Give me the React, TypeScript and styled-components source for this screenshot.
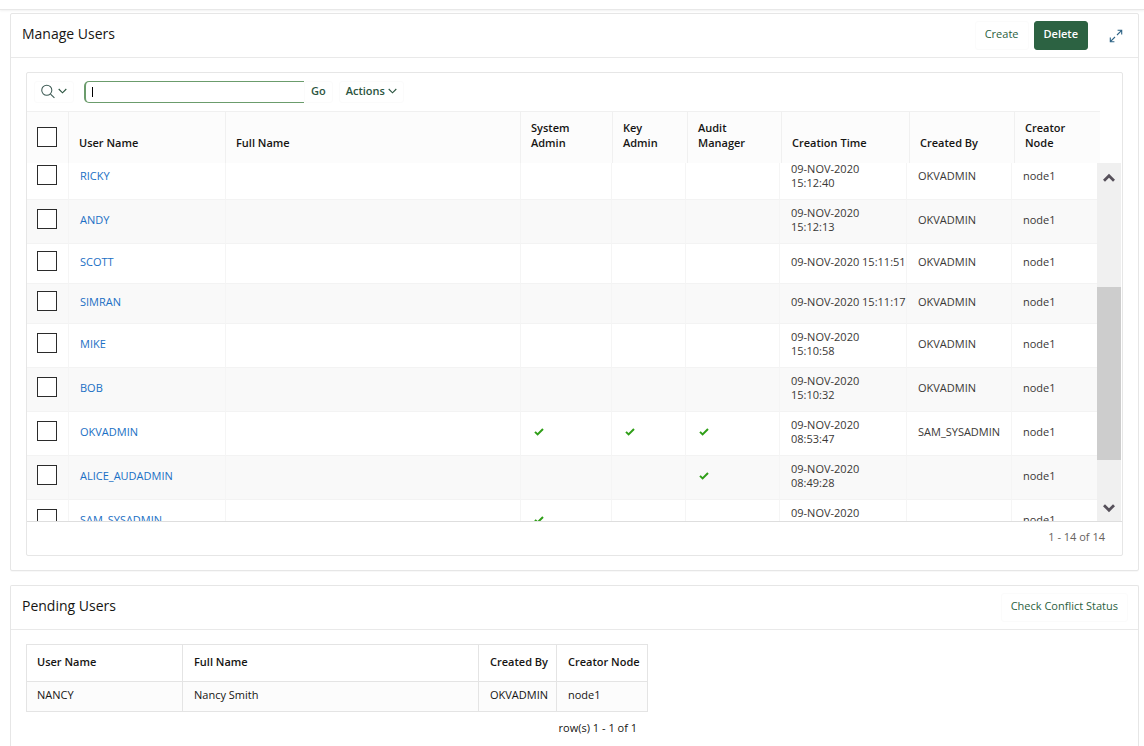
import React, { useLayoutEffect, useRef } from "react";
import styled, { createGlobalStyle } from "styled-components";

const GlobalStyle = createGlobalStyle`
  *, *::before, *::after { box-sizing: border-box; }
  body {
    margin: 0;
    background: #fff;
    color: #161513;
    font-family: "Open Sans", "Noto Sans", sans-serif;
    font-size: 11px;
    line-height: 14px;
  }
  button, input { font: inherit; color: inherit; }
`;

const Page = styled.div`
  display: flex;
  flex-direction: column;
  min-height: 100vh;
`;

const TopBar = styled.header`
  flex: none;
  height: 10px;
  border-bottom: 1px solid #e8e8e8;
  box-shadow: 0 1px 2px rgba(0, 0, 0, 0.06);
`;

const Content = styled.main`
  flex: 1;
  display: flex;
  flex-direction: column;
  gap: 14px;
  padding: 3px 5px 0 10px;
`;

const Panel = styled.section<{ $open?: boolean }>`
  flex: ${(p) => (p.$open ? "1" : "none")};
  border: 1px solid #e6e6e6;
  border-bottom-width: ${(p) => (p.$open ? "0" : "1px")};
  border-radius: ${(p) => (p.$open ? "2px 2px 0 0" : "2px")};
  box-shadow: 0 1px 1px rgba(0, 0, 0, 0.03);
`;

const PanelHeader = styled.div`
  display: flex;
  align-items: flex-start;
  height: 44px;
  padding: 7px 10px 0 11px;
  border-bottom: 1px solid #e9e9e9;
`;

const PanelTitle = styled.h2`
  flex: 1;
  margin: 3px 0 0;
  font-size: 14px;
  line-height: 20px;
  font-weight: 400;
`;

const PanelBody = styled.div`
  padding: 14px 15px;
`;

const Button = styled.button<{ $primary?: boolean }>`
  height: 29px;
  padding: 0 9px 4px;
  border: 1px solid ${(p) => (p.$primary ? "#2c6242" : "#fbfbfb")};
  border-radius: 3px;
  background: ${(p) => (p.$primary ? "#2c6242" : "#fff")};
  color: ${(p) => (p.$primary ? "#fff" : "#2c5f41")};
  font-weight: ${(p) => (p.$primary ? 600 : 400)};
  white-space: nowrap;
`;

const HeaderActions = styled.div`
  display: flex;
  gap: 5px;
`;

const IconButton = styled.button`
  display: grid;
  place-items: center;
  width: 24px;
  height: 29px;
  margin-left: 16px;
  padding: 0;
  border: 0;
  background: none;
`;

const Report = styled.div`
  border: 1px solid #e6e6e6;
  border-radius: 2px;
`;

const Toolbar = styled.form`
  display: flex;
  align-items: center;
  height: 38px;
  padding: 0 7px;
`;

const ToolButton = styled.button<{ $indent?: number }>`
  display: flex;
  align-items: center;
  gap: 3px;
  height: 22px;
  margin-left: ${(p) => p.$indent ?? 0}px;
  padding: 0 6px 2px;
  border: 1px solid #fbfbfb;
  border-radius: 3px;
  background: #fff;
  color: #2c5541;
  font-weight: 600;
`;

const SearchBox = styled.div`
  position: relative;
  margin-left: 10px;
`;

const SearchInput = styled.input`
  display: block;
  width: 220px;
  height: 22px;
  padding: 0 7px;
  border: 1px solid #6b9c6c;
  border-left-width: 2px;
  border-right: 0;
  border-radius: 5px 0 0 5px;
  outline: 0;
  background: #fff;
  caret-color: transparent;
`;

const Caret = styled.span`
  position: absolute;
  left: 8px;
  top: 6px;
  width: 1px;
  height: 10px;
  background: #000;
`;

const HeadWrap = styled.div`
  padding-right: 22px;
`;

const ReportTable = styled.table`
  width: 100%;
  table-layout: fixed;
  border-collapse: separate;
  border-spacing: 0;
`;

const HeadCell = styled.th`
  height: 52px;
  padding: 8px 10px 13px;
  border-top: 1px solid #f0f0f0;
  border-right: 1px solid #f0f0f0;
  background: #fcfcfc;
  line-height: 15px;
  font-weight: 600;
  text-align: left;
  vertical-align: bottom;
  &:first-child { vertical-align: middle; padding-bottom: 10px; }
  &:last-child { border-right: 0; }
`;

const Scroller = styled.div`
  display: flex;
  height: 358px;
`;

const Viewport = styled.div`
  flex: 1;
  overflow: hidden;
`;

const Row = styled.tr`
  &:nth-child(even) { background: #f9f9f9; }
`;

const Cell = styled.td`
  height: 40px;
  padding: 6px 0 9px 11px;
  border-right: 1px solid #f5f5f5;
  border-bottom: 1px solid #f3f3f3;
  color: #3a3836;
  vertical-align: middle;
  white-space: nowrap;
  &:first-child { padding: 6px 10px 11px; }
  &:last-child { border-right: 0; }
`;

const UserLink = styled.a`
  color: #1a6fc4;
  text-decoration: none;
`;

const Checkbox = styled.input.attrs({ type: "checkbox" })`
  appearance: none;
  display: block;
  width: 20px;
  height: 20px;
  margin: 0;
  border: 1px solid #2b2b2b;
  background: #fff;
`;

const CheckIcon = styled.svg`
  display: block;
  margin-left: 2px;
`;

const ScrollBar = styled.div`
  display: flex;
  flex-direction: column;
  width: 24px;
  margin-right: 1px;
  background: #f0f0f0;
`;

const ScrollButton = styled.button`
  display: grid;
  place-items: center;
  height: 28px;
  padding: 2px 0 0;
  border: 0;
  background: none;
`;

const ScrollTrack = styled.div`
  flex: 1;
  padding-top: 96px;
`;

const ScrollThumb = styled.div`
  height: 173px;
  background: #cdcdcd;
`;

const ReportFooter = styled.div`
  height: 34px;
  padding: 8px 17px 0;
  border-top: 1px solid #dedede;
  color: #66625e;
  text-align: right;
`;

const PendingWrap = styled.div`
  width: 622px;
  max-width: 100%;
`;

const PendingTable = styled.table`
  width: 100%;
  table-layout: fixed;
  border-collapse: collapse;
  th, td {
    padding: 0 0 0 11px;
    border: 1px solid #e4e4e4;
    text-align: left;
    white-space: nowrap;
  }
  th { height: 37px; padding-bottom: 2px; font-weight: 600; }
  td { height: 30px; padding-bottom: 3px; background: #fcfcfc; }
  th:first-child, td:first-child { padding-left: 10px; }
`;

const PendingCount = styled.div`
  padding: 9px 11px;
  text-align: right;
`;

type User = {
  name: string;
  roles?: string;
  date: string;
  time: string;
  oneLine?: boolean;
  by?: string;
};

const users: User[] = [
  { name: "RICKY", date: "09-NOV-2020", time: "15:12:40", by: "OKVADMIN" },
  { name: "ANDY", date: "09-NOV-2020", time: "15:12:13", by: "OKVADMIN" },
  { name: "SCOTT", date: "09-NOV-2020", time: "15:11:51", by: "OKVADMIN", oneLine: true },
  { name: "SIMRAN", date: "09-NOV-2020", time: "15:11:17", by: "OKVADMIN", oneLine: true },
  { name: "MIKE", date: "09-NOV-2020", time: "15:10:58", by: "OKVADMIN" },
  { name: "BOB", date: "09-NOV-2020", time: "15:10:32", by: "OKVADMIN" },
  { name: "OKVADMIN", roles: "SKA", date: "09-NOV-2020", time: "08:53:47", by: "SAM_SYSADMIN" },
  { name: "ALICE_AUDADMIN", roles: "A", date: "09-NOV-2020", time: "08:49:28" },
  { name: "SAM_SYSADMIN", roles: "S", date: "09-NOV-2020", time: "08:49:27" },
];

const Columns = ({ widths }: { widths: number[] }) => (
  <colgroup>
    {widths.map((w, i) => (
      <col key={i} width={w || undefined} />
    ))}
  </colgroup>
);

const Tick = () => (
  <CheckIcon width="10" height="8" viewBox="0 0 10 8" role="img" aria-label="Yes">
    <path d="M1 3.9 3.6 6.4 9 1" fill="none" stroke="#2f9e17" strokeWidth="2" />
  </CheckIcon>
);

const Chevron = ({ up }: { up?: boolean }) => (
  <svg width="12" height="10" viewBox="0 0 12 10" aria-hidden="true">
    <path d={up ? "M1 7.8 6 2.8 11 7.8" : "M1 2.2 6 7.2 11 2.2"} fill="none" stroke="#56505a" strokeWidth="2.8" />
  </svg>
);

const SmallChevron = () => (
  <svg width="9" height="6" viewBox="0 0 9 6" aria-hidden="true">
    <path d="M.7 1 4.5 4.8 8.3 1" fill="none" stroke="#2c5541" strokeWidth="1.1" />
  </svg>
);

export default function App() {
  const viewport = useRef<HTMLDivElement>(null);
  useLayoutEffect(() => {
    if (viewport.current) viewport.current.scrollTop = 7;
  }, []);

  return (
    <Page>
      <GlobalStyle />
      <TopBar />
      <Content>
        <Panel>
          <PanelHeader>
            <PanelTitle>Manage Users</PanelTitle>
            <HeaderActions>
              <Button type="button">Create</Button>
              <Button type="button" $primary>Delete</Button>
            </HeaderActions>
            <IconButton type="button" aria-label="Maximize">
              <svg width="14" height="14" viewBox="0 0 14 14" fill="none" stroke="#2f6486" strokeWidth="1.1">
                <path d="M8 6 12.7 1.3M8.6 1.3H12.7V5.4M6 8 1.3 12.7M1.3 8.6V12.7H5.4" />
              </svg>
            </IconButton>
          </PanelHeader>
          <PanelBody>
            <Report>
              <Toolbar onSubmit={(e) => e.preventDefault()}>
                <ToolButton type="button" aria-label="Select columns to search">
                  <svg width="14" height="15" viewBox="0 0 15 15" fill="none" stroke="#3d5a54" strokeWidth="1.1">
                    <circle cx="6.2" cy="6.2" r="5.4" />
                    <path d="M10.2 10.2 14.4 14.4" />
                  </svg>
                  <SmallChevron />
                </ToolButton>
                <SearchBox>
                  <SearchInput type="text" aria-label="Search" />
                  <Caret />
                </SearchBox>
                <ToolButton type="submit">Go</ToolButton>
                <ToolButton type="button" $indent={6}>
                  Actions
                  <SmallChevron />
                </ToolButton>
              </Toolbar>
              <HeadWrap>
                <ReportTable>
                  <Columns widths={[42, 157, 0, 92, 75, 94, 128, 105, 85]} />
                  <thead>
                    <tr>
                      <HeadCell><Checkbox aria-label="Select all users" /></HeadCell>
                      <HeadCell>User Name</HeadCell>
                      <HeadCell>Full Name</HeadCell>
                      <HeadCell>System Admin</HeadCell>
                      <HeadCell>Key Admin</HeadCell>
                      <HeadCell>Audit Manager</HeadCell>
                      <HeadCell>Creation Time</HeadCell>
                      <HeadCell>Created By</HeadCell>
                      <HeadCell>Creator Node</HeadCell>
                    </tr>
                  </thead>
                </ReportTable>
              </HeadWrap>
              <Scroller>
                <Viewport ref={viewport}>
                  <ReportTable aria-label="Users">
                    <Columns widths={[42, 157, 0, 91, 74, 94, 127, 105, 85]} />
                    <tbody>
                      {users.map((u) => (
                        <Row key={u.name}>
                          <Cell><Checkbox aria-label={`Select ${u.name}`} /></Cell>
                          <Cell><UserLink href="#">{u.name}</UserLink></Cell>
                          <Cell />
                          {["S", "K", "A"].map((r) => (
                            <Cell key={r}>{u.roles?.includes(r) && <Tick />}</Cell>
                          ))}
                          <Cell>
                            {u.date}
                            {u.oneLine ? " " : <br />}
                            {u.time}
                          </Cell>
                          <Cell>{u.by}</Cell>
                          <Cell>node1</Cell>
                        </Row>
                      ))}
                    </tbody>
                  </ReportTable>
                </Viewport>
                <ScrollBar>
                  <ScrollButton type="button" aria-label="Scroll up"><Chevron up /></ScrollButton>
                  <ScrollTrack><ScrollThumb /></ScrollTrack>
                  <ScrollButton type="button" aria-label="Scroll down"><Chevron /></ScrollButton>
                </ScrollBar>
              </Scroller>
              <ReportFooter>1 - 14 of 14</ReportFooter>
            </Report>
          </PanelBody>
        </Panel>

        <Panel $open>
          <PanelHeader>
            <PanelTitle>Pending Users</PanelTitle>
            <Button type="button">Check Conflict Status</Button>
          </PanelHeader>
          <PanelBody>
            <PendingWrap>
              <PendingTable>
                <Columns widths={[156, 0, 78, 91]} />
                <thead>
                  <tr>
                    <th>User Name</th>
                    <th>Full Name</th>
                    <th>Created By</th>
                    <th>Creator Node</th>
                  </tr>
                </thead>
                <tbody>
                  <tr>
                    <td>NANCY</td>
                    <td>Nancy Smith</td>
                    <td>OKVADMIN</td>
                    <td>node1</td>
                  </tr>
                </tbody>
              </PendingTable>
              <PendingCount>row(s) 1 - 1 of 1</PendingCount>
            </PendingWrap>
          </PanelBody>
        </Panel>
      </Content>
    </Page>
  );
}
